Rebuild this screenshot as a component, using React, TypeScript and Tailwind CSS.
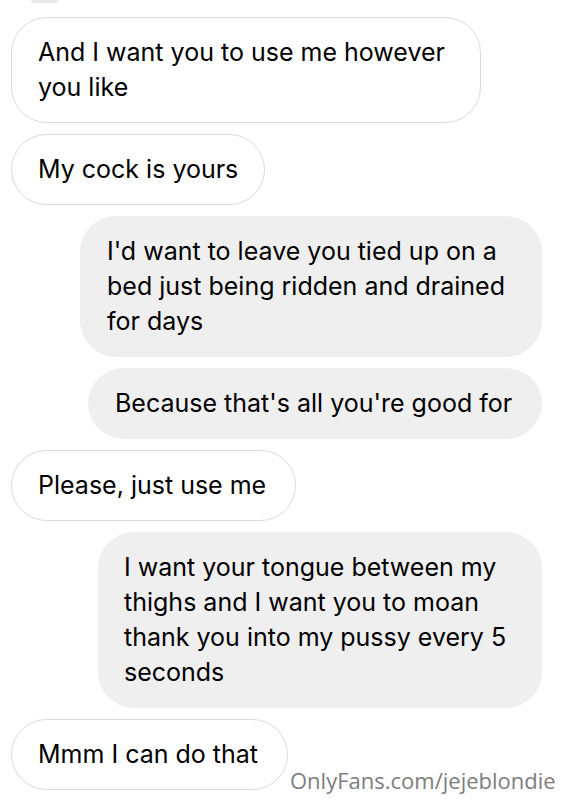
const font = { fontFamily: 'Inter, "Liberation Sans", sans-serif' };

type Msg = { side: 'left' | 'right'; width: number; pad: number; lines: string[] };

const messages: Msg[] = [
  { side: 'left', width: 470, pad: 26, lines: ['And I want you to use me however', 'you like'] },
  { side: 'left', width: 254, pad: 26, lines: ['My cock is yours'] },
  {
    side: 'right',
    width: 462,
    pad: 27,
    lines: ["I'd want to leave you tied up on a", 'bed just being ridden and drained', 'for days'],
  },
  { side: 'right', width: 454, pad: 27, lines: ["Because that's all you're good for"] },
  { side: 'left', width: 285, pad: 26, lines: ['Please, just use me'] },
  {
    side: 'right',
    width: 444,
    pad: 26,
    lines: ['I want your tongue between my', 'thighs and I want you to moan', 'thank you into my pussy every 5', 'seconds'],
  },
  { side: 'left', width: 277, pad: 26, lines: ['Mmm I can do that'] },
];

function Bubble({ msg }: { msg: Msg }) {
  const left = msg.side === 'left';
  return (
    <div
      className={
        left
          ? 'self-start rounded-[36px] border-[1.5px] border-[#dadada] bg-white py-[17px]'
          : 'mr-[21px] self-end rounded-[36px] bg-[#efefef] py-[18px]'
      }
      style={{ width: msg.width, paddingLeft: msg.pad }}
    >
      {msg.lines.map((l, i) => (
        <div key={i} className="whitespace-nowrap text-[25px] leading-[35px] text-black">
          {l}
        </div>
      ))}
    </div>
  );
}

export default function App() {
  return (
    <div className="relative h-[800px] w-[563px] overflow-hidden bg-white" style={font}>
      <div className="flex flex-col gap-[11px] pl-[11px]">
        <div className="mb-[3px] ml-[20px] h-[3px] w-[27px] rounded-b-full bg-[#e8e8e8]" />
        {messages.map((m, i) => (
          <Bubble key={i} msg={m} />
        ))}
      </div>
      <div
        className="absolute left-[290px] top-[764px] text-[22px] text-[#7d7d7d]"
        style={{ fontFamily: '"Open Sans", "Noto Sans", sans-serif' }}
      >
        OnlyFans.com/jejeblondie
      </div>
    </div>
  );
}
